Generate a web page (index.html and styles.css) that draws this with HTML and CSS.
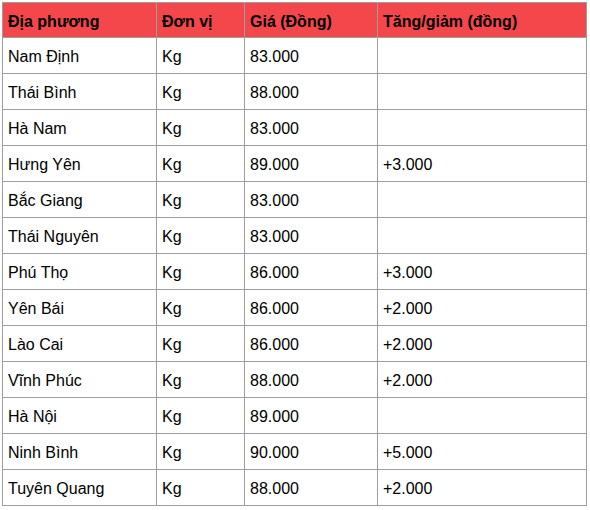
FILE: index.html
```html
<!DOCTYPE html>
<html lang="vi">
<head>
<meta charset="utf-8">
<title>Giá lợn hơi</title>
<link rel="stylesheet" href="styles.css">
</head>
<body>
<table class="price-table">
  <colgroup>
    <col class="c1"><col class="c2"><col class="c3"><col class="c4">
  </colgroup>
  <thead>
    <tr><th>Địa phương</th><th>Đơn vị</th><th>Giá (Đồng)</th><th>Tăng/giảm (đồng)</th></tr>
  </thead>
  <tbody>
    <tr><td>Nam Định</td><td>Kg</td><td>83.000</td><td></td></tr>
    <tr><td>Thái Bình</td><td>Kg</td><td>88.000</td><td></td></tr>
    <tr><td>Hà Nam</td><td>Kg</td><td>83.000</td><td></td></tr>
    <tr><td>Hưng Yên</td><td>Kg</td><td>89.000</td><td>+3.000</td></tr>
    <tr><td>Bắc Giang</td><td>Kg</td><td>83.000</td><td></td></tr>
    <tr><td>Thái Nguyên</td><td>Kg</td><td>83.000</td><td></td></tr>
    <tr><td>Phú Thọ</td><td>Kg</td><td>86.000</td><td>+3.000</td></tr>
    <tr><td>Yên Bái</td><td>Kg</td><td>86.000</td><td>+2.000</td></tr>
    <tr><td>Lào Cai</td><td>Kg</td><td>86.000</td><td>+2.000</td></tr>
    <tr><td>Vĩnh Phúc</td><td>Kg</td><td>88.000</td><td>+2.000</td></tr>
    <tr><td>Hà Nội</td><td>Kg</td><td>89.000</td><td></td></tr>
    <tr><td>Ninh Bình</td><td>Kg</td><td>90.000</td><td>+5.000</td></tr>
    <tr><td>Tuyên Quang</td><td>Kg</td><td>88.000</td><td>+2.000</td></tr>
  </tbody>
</table>
</body>
</html>
```

FILE: styles.css
```css
html, body {
  margin: 0;
  padding: 0;
  background: #ffffff;
}
body {
  padding: 2px;
  font-family: "Liberation Sans", Arial, sans-serif;
  font-size: 16px;
  line-height: 18px;
  color: #000;
}
.price-table {
  border-collapse: collapse;
  table-layout: fixed;
  width: 585px;
}
.price-table .c1 { width: 154px; }
.price-table .c2 { width: 88px; }
.price-table .c3 { width: 133px; }
.price-table .c4 { width: 209px; }
.price-table th,
.price-table td {
  border: 1px solid #9e9e9e;
  padding: 3px 5px 0;
  text-align: left;
  vertical-align: middle;
  white-space: nowrap;
}
.price-table th {
  height: 31px;
  background: #f3474c;
  font-weight: bold;
}
.price-table td {
  height: 32px;
}
```
